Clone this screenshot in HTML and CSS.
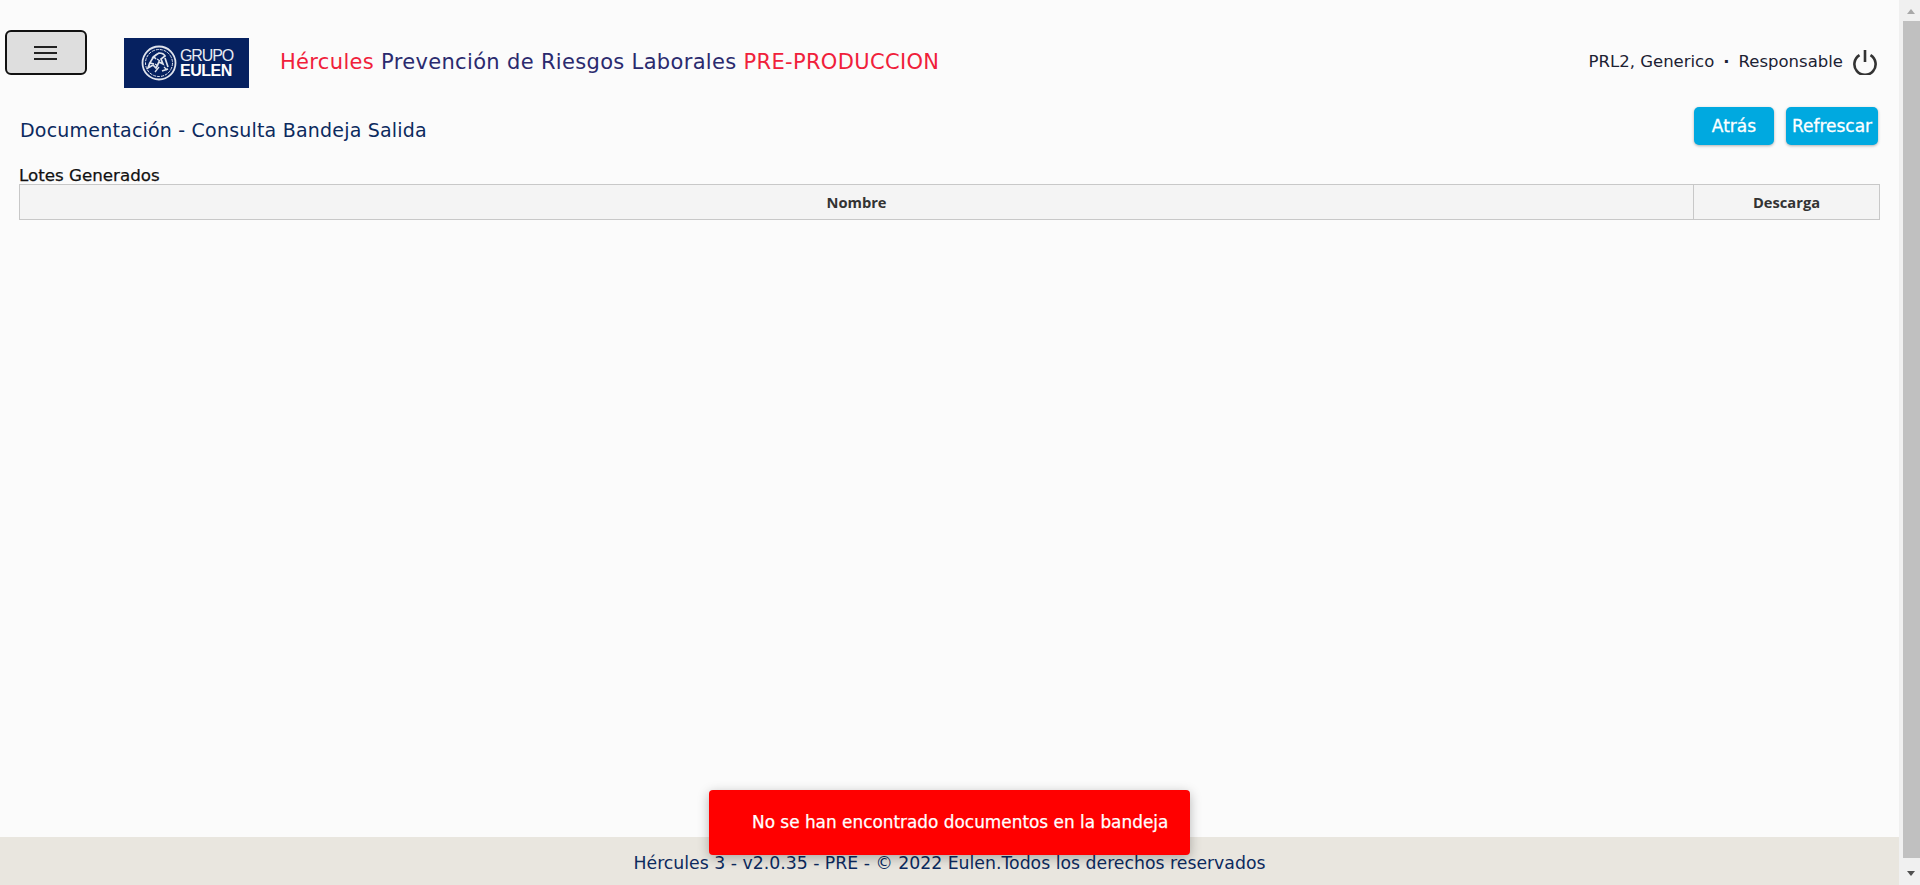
FILE: index.html
```html
<!DOCTYPE html>
<html lang="es">
<head>
<meta charset="utf-8">
<title>Hércules</title>
<link rel="stylesheet" href="styles.css">
</head>
<body>
<div class="shell">
  <div class="page">
    <main class="content">
      <header class="topbar">
        <button class="menu-btn" type="button" aria-label="Menú">
          <svg width="24" height="16" viewBox="0 0 24 16"><path d="M0 2h23M0 8h23M0 14h23" stroke="#222" stroke-width="2.2" fill="none"/></svg>
        </button>
        <div class="logo">
          <svg class="emblem" width="36" height="36" viewBox="0 0 36 36" fill="none" stroke="#dfe3ec">
            <circle cx="18" cy="18" r="16.5" stroke-width="1.8"/>
            <circle cx="18" cy="18" r="13.5" stroke-width="1" stroke-dasharray="3 1"/>
            <path d="M7 23c2-7 5-12 11-15 3 0 5 1 6 3l-4 3 2 5-4-2-3 6-3-3-5 3zM24 13l3 9M21 26l6-2M12 11l3 3M9 18l4 1" stroke-width="1.7"/>
            <path d="M11 13l5-4M14 27l4-5M26 25l-3-3M16 14l3 2M14 19l3 2" stroke-width="1.3"/>
          </svg>
          <div class="logo-text"><span class="logo-top">GRUPO</span><span class="logo-bottom">EULEN</span></div>
        </div>
        <h1 class="app-title"><span class="red">Hércules</span> Prevención de Riesgos Laborales <span class="red">PRE-PRODUCCION</span></h1>
        <div class="user">
          <span>PRL2, Generico</span><span class="dot">·</span><span>Responsable</span>
          <svg class="power" width="26" height="26" viewBox="0 0 26 26" fill="none" stroke="#333" stroke-width="2.6"><path d="M7.5 6.2a10.6 10.6 0 1 0 11 0M13 1v12"/></svg>
        </div>
      </header>
      <div class="titlebar">
        <h2 class="page-title">Documentación - Consulta Bandeja Salida</h2>
        <div class="actions">
          <button class="btn btn-back" type="button">Atrás</button>
          <button class="btn btn-refresh" type="button">Refrescar</button>
        </div>
      </div>
      <h3 class="section">Lotes Generados</h3>
      <table class="grid">
        <thead><tr><th>Nombre</th><th class="col-download">Descarga</th></tr></thead>
      </table>
    </main>
    <footer class="footer">Hércules 3 - v2.0.35 - PRE - © 2022 Eulen.Todos los derechos reservados</footer>
    <div class="toast">No se han encontrado documentos en la bandeja</div>
  </div>
  <aside class="scrollbar" aria-hidden="true">
    <span class="arrow up"></span>
    <span class="thumb"></span>
    <span class="arrow down"></span>
  </aside>
</div>
</body>
</html>
```
FILE: styles.css
```css
* { box-sizing: border-box; }
html, body { margin: 0; height: 100%; overflow: hidden; }
body { background: #fbfbfb; font-family: "DejaVu Sans", sans-serif; color: #222; }
.shell { display: flex; height: 885px; }
.page { position: relative; flex: 1; display: flex; flex-direction: column; min-width: 0; }
.content { flex: 1; padding: 30px 19px 0 5px; }

.topbar { display: flex; align-items: flex-start; height: 58px; }
.menu-btn { width: 82px; height: 45px; padding: 0; display: flex; align-items: center; justify-content: center; background: #dedede; border: 2px solid #111; border-radius: 6px; }
.logo { margin: 8px 0 0 37px; width: 125px; height: 50px; background: #062160; display: flex; align-items: center; gap: 3px; padding-left: 17px; color: #e8ebf2; }
.logo-text { display: flex; flex-direction: column; font-family: "Liberation Sans", sans-serif; }
.logo-top { font-size: 16px; line-height: 15px; letter-spacing: -1.1px; }
.logo-bottom { font-size: 16px; line-height: 15px; font-weight: 700; letter-spacing: -0.5px; color: #fff; }
.app-title { margin: 19px 0 0 31px; font-size: 21px; line-height: 26px; letter-spacing: .33px; font-weight: 400; color: #2a2a6e; white-space: nowrap; }
.red { color: #f0203a; }
.user { margin: 19px 2px 0 auto; display: flex; align-items: center; gap: 9px; font-size: 16.5px; line-height: 26px; color: #1c2233; white-space: nowrap; }
.user .dot { font-weight: 700; }
.power { margin-left: 0; }

.titlebar { display: flex; justify-content: space-between; align-items: flex-start; margin-left: 15px; height: 80px; padding-top: 19px; }
.page-title { margin: 11px 0 0 0; font-size: 19px; line-height: 24px; letter-spacing: .2px; font-weight: 400; color: #0c2a5e; }
.actions { display: flex; gap: 12px; margin-right: 2px; }
.btn { height: 38px; border: 0; border-radius: 5px; background: #00a9e0; color: #fff; font-family: "DejaVu Sans", sans-serif; font-size: 17px; font-weight: 400; -webkit-text-stroke: .3px #fff; padding: 0; box-shadow: 0 1px 3px rgba(0,0,0,.3); }
.btn-back { width: 80px; }
.btn-refresh { width: 92px; }

.section { margin: -2px 0 0 14px; font-size: 16.7px; line-height: 18px; font-weight: 400; -webkit-text-stroke: .25px #111; color: #111; }
.grid { margin-left: 14px; width: 1861px; height: 36px; border-collapse: collapse; table-layout: fixed; font-family: "Open Sans", sans-serif; }
.grid th { background: #f4f4f4; border: 1px solid #c8c8c8; font-size: 14.7px; font-weight: 700; color: #333; padding: 0; }
.col-download { width: 186px; }

.footer { height: 48px; background: #e9e6df; text-align: center; font-size: 17.3px; line-height: 53px; color: #0c2a5e; white-space: nowrap; }
.toast { position: absolute; left: 709px; top: 790px; width: 481px; height: 65px; padding-left: 43px; background: #ff0000; color: #fff; font-size: 16.9px; line-height: 65px; -webkit-text-stroke: .25px #fff; border-radius: 4px; white-space: nowrap; box-shadow: 0 3px 12px rgba(0,0,0,.28); }

.scrollbar { width: 21px; background: #f0f0f0; display: flex; flex-direction: column; align-items: center; padding-left: 3px; }
.thumb { flex: 1; width: 17px; background: #c0c0c0; }
.arrow { width: 0; height: 0; border-left: 4.5px solid transparent; border-right: 4.5px solid transparent; }
.arrow.up { border-bottom: 5px solid #a8a8a8; margin: 9px 0 7px; }
.arrow.down { border-top: 5px solid #505050; margin: 13px 0 9px; }
```
